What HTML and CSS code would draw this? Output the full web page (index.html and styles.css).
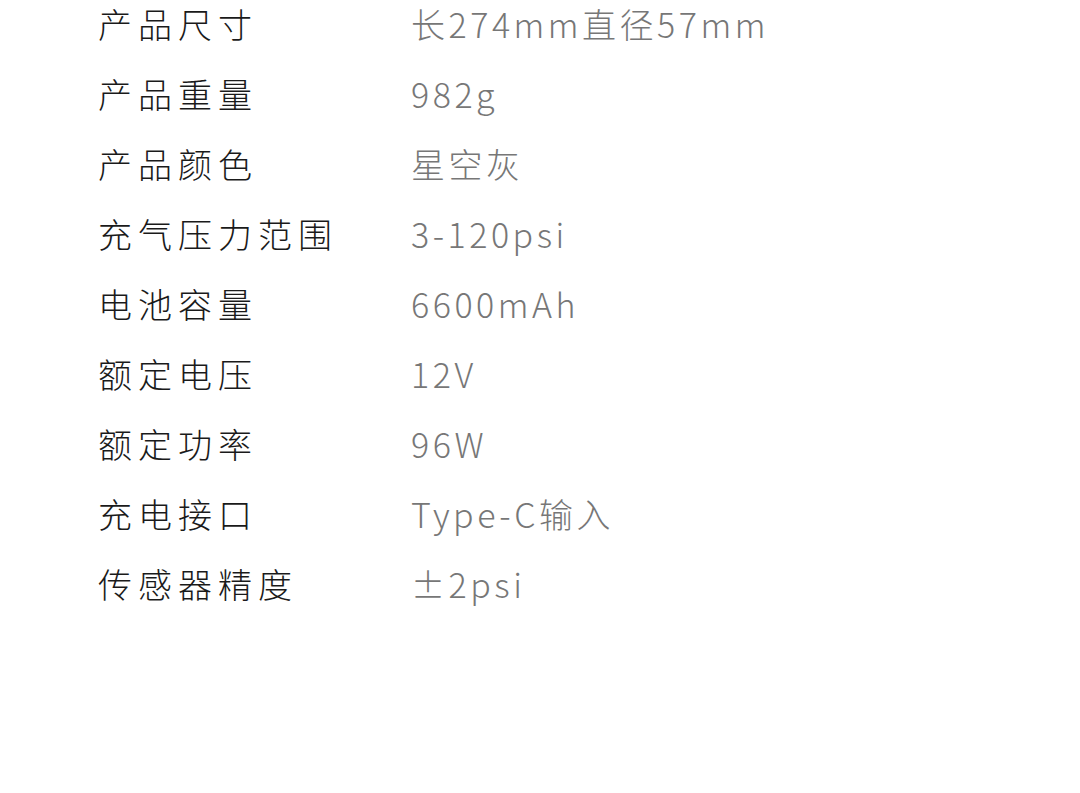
FILE: index.html
```html
<!DOCTYPE html>
<html lang="zh-CN">
<head>
    <meta charset="UTF-8">
    <title>产品参数</title>
    <link rel="stylesheet" href="styles.css">
</head>
<body>
    <dl class="specs">
        <div class="row"><dt>产品尺寸</dt><dd>长274mm直径57mm</dd></div>
        <div class="row"><dt>产品重量</dt><dd>982g</dd></div>
        <div class="row"><dt>产品颜色</dt><dd>星空灰</dd></div>
        <div class="row"><dt>充气压力范围</dt><dd>3-120psi</dd></div>
        <div class="row"><dt>电池容量</dt><dd>6600mAh</dd></div>
        <div class="row"><dt>额定电压</dt><dd>12V</dd></div>
        <div class="row"><dt>额定功率</dt><dd>96W</dd></div>
        <div class="row"><dt>充电接口</dt><dd>Type-C输入</dd></div>
        <div class="row"><dt>传感器精度</dt><dd>±2psi</dd></div>
    </dl>
</body>
</html>
```

FILE: styles.css
```css
* {box-sizing: border-box; margin: 0; padding: 0;}
body {
    background: #fff;
    font-family: "Noto Sans CJK SC", "Noto Sans", sans-serif;
    font-weight: 300;
    overflow: hidden;
}
.specs {
    margin-top: -11px;
    padding-left: 98px;
}
.row {
    display: flex;
    height: 70px;
    line-height: 70px;
    font-size: 34px;
}
.row dt {
    width: 313px;
    color: #1a1a1a;
    letter-spacing: 6px;
}
.row dd {
    color: #777;
    letter-spacing: 3.5px;
}
```
